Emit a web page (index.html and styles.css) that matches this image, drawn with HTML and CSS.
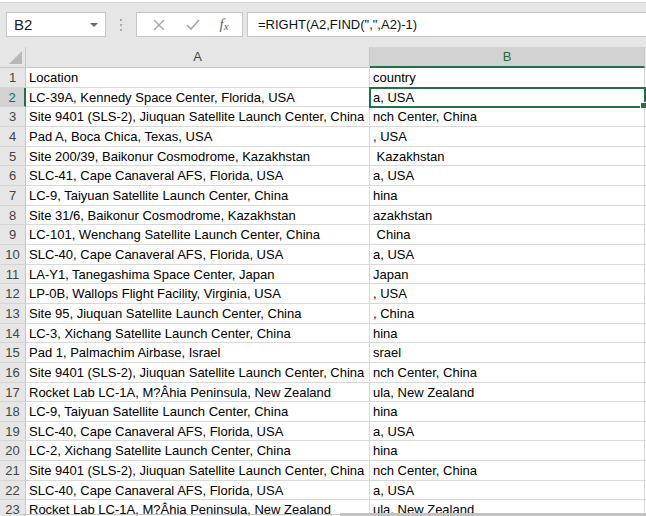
FILE: index.html
```html
<!DOCTYPE html>
<html lang="en">
<head>
    <meta charset="UTF-8">
    <title>Book1 - Excel</title>
    <link rel="stylesheet" href="styles.css">
</head>
<body>
    <div class="toolbar">
        <div class="namebox">
            <span>B2</span>
            <span class="caret"></span>
        </div>
        <div class="grip"><i></i><i></i><i></i></div>
        <div class="fbuttons">
            <svg width="14" height="14" viewBox="0 0 14 14"><path d="M2 2 L12 12 M12 2 L2 12" stroke="#a6a6a6" stroke-width="1.4" fill="none"/></svg>
            <svg width="16" height="14" viewBox="0 0 16 14"><path d="M2 7 L6 11 L14 2" stroke="#a6a6a6" stroke-width="1.6" fill="none"/></svg>
            <span class="fx">f<sub>x</sub></span>
        </div>
        <div class="formula">=RIGHT(A2,FIND(",",A2)-1)</div>
    </div>

    <div class="sheet" id="sheet">
        <div class="corner"></div>
        <div class="colhead">A</div>
        <div class="colhead selected">B</div>
        <div class="colhead"></div>
    </div>

    <div class="hscroll">
        <div class="track"></div>
        <div class="thumb"></div>
    </div>

    <script>
        const rows = [
            ['Location', 'country'],
            ['LC-39A, Kennedy Space Center, Florida, USA', 'a, USA'],
            ['Site 9401 (SLS-2), Jiuquan Satellite Launch Center, China', 'nch Center, China'],
            ['Pad A, Boca Chica, Texas, USA', ', USA'],
            ['Site 200/39, Baikonur Cosmodrome, Kazakhstan', ' Kazakhstan'],
            ['SLC-41, Cape Canaveral AFS, Florida, USA', 'a, USA'],
            ['LC-9, Taiyuan Satellite Launch Center, China', 'hina'],
            ['Site 31/6, Baikonur Cosmodrome, Kazakhstan', 'azakhstan'],
            ['LC-101, Wenchang Satellite Launch Center, China', ' China'],
            ['SLC-40, Cape Canaveral AFS, Florida, USA', 'a, USA'],
            ['LA-Y1, Tanegashima Space Center, Japan', 'Japan'],
            ['LP-0B, Wallops Flight Facility, Virginia, USA', ', USA'],
            ['Site 95, Jiuquan Satellite Launch Center, China', ', China'],
            ['LC-3, Xichang Satellite Launch Center, China', 'hina'],
            ['Pad 1, Palmachim Airbase, Israel', 'srael'],
            ['Site 9401 (SLS-2), Jiuquan Satellite Launch Center, China', 'nch Center, China'],
            ['Rocket Lab LC-1A, M?\u00c2hia Peninsula, New Zealand', 'ula, New Zealand'],
            ['LC-9, Taiyuan Satellite Launch Center, China', 'hina'],
            ['SLC-40, Cape Canaveral AFS, Florida, USA', 'a, USA'],
            ['LC-2, Xichang Satellite Launch Center, China', 'hina'],
            ['Site 9401 (SLS-2), Jiuquan Satellite Launch Center, China', 'nch Center, China'],
            ['SLC-40, Cape Canaveral AFS, Florida, USA', 'a, USA'],
            ['Rocket Lab LC-1A, M?\u00c2hia Peninsula, New Zealand', 'ula, New Zealand']
        ];

        const sheet = document.getElementById('sheet');

        function cell(cls, text) {
            const div = document.createElement('div');
            div.className = cls;
            div.textContent = text;
            sheet.appendChild(div);
        }

        rows.forEach((r, i) => {
            const n = i + 1;
            cell(n === 2 ? 'rowhead selected' : 'rowhead', n);
            cell('cell', r[0]);
            cell(n === 2 ? 'cell active' : 'cell', r[1]);
            cell('cell', '');
        });
    </script>
</body>
</html>
```

FILE: styles.css
```css
body {
    margin: 0;
    width: 646px;
    height: 516px;
    overflow: hidden;
    position: relative;
    font-family: "Liberation Sans", Arial, sans-serif;
    background: #fff;
}
.toolbar {
    height: 45px;
    margin-top: 2px;
    border-top: 1px solid #d6d6d6;
    background: #e6e6e6;
    display: flex;
    align-items: flex-start;
    padding-top: 9px;
    box-sizing: border-box;
}
.namebox {
    width: 100px;
    height: 25px;
    margin-left: 6px;
    background: #fff;
    border: 1px solid #c6c6c6;
    box-sizing: border-box;
    display: flex;
    align-items: center;
    justify-content: space-between;
    padding: 0 7px 0 7px;
    font-size: 15px;
    color: #222;
}
.caret {
    width: 0;
    height: 0;
    border-left: 4px solid transparent;
    border-right: 4px solid transparent;
    border-top: 4px solid #6a6a6a;
}
.grip {
    width: 30px;
    height: 25px;
    display: flex;
    flex-direction: column;
    align-items: center;
    justify-content: center;
    gap: 3px;
}
.grip i {
    width: 2px;
    height: 2px;
    background: #a8a8a8;
}
.fbuttons {
    width: 107px;
    height: 25px;
    background: #fff;
    border: 1px solid #c6c6c6;
    box-sizing: border-box;
    display: flex;
    align-items: center;
    justify-content: space-around;
    padding: 0 4px 0 6px;
}
.fx {
    font-family: "Liberation Serif", serif;
    font-style: italic;
    font-size: 15px;
    color: #666;
}
.fx sub {
    font-size: 11px;
    vertical-align: -1px;
}
.formula {
    flex: 1;
    height: 25px;
    margin-left: 4px;
    background: #fff;
    border: 1px solid #c6c6c6;
    border-right: none;
    box-sizing: border-box;
    padding-left: 10px;
    font-size: 13px;
    line-height: 23px;
    color: #111;
}
.sheet {
    display: grid;
    grid-template-columns: 26px 344px 275px 1fr;
    grid-template-rows: 21px;
    grid-auto-rows: 19.67px;
    font-size: 13px;
}
.corner {
    background: #e6e6e6;
    border-right: 1px solid #c8c8c8;
    border-bottom: 1px solid #c8c8c8;
    position: relative;
}
.corner::after {
    content: "";
    position: absolute;
    right: 3px;
    bottom: 3px;
    border-left: 13px solid transparent;
    border-bottom: 13px solid #b8b8b8;
}
.colhead {
    background: #e6e6e6;
    border-right: 1px solid #c8c8c8;
    border-bottom: 1px solid #c8c8c8;
    text-align: center;
    line-height: 20px;
    color: #444;
}
.colhead.selected {
    background: #d2d2d2;
    color: #1e6b40;
    border-bottom: 2px solid #217346;
}
.rowhead {
    background: #e6e6e6;
    border-right: 1px solid #c8c8c8;
    border-bottom: 1px solid #d4d4d4;
    text-align: center;
    line-height: 19px;
    color: #444;
}
.rowhead.selected {
    background: #d2d2d2;
    color: #1e6b40;
    border-right: 2px solid #217346;
}
.cell {
    border-right: 1px solid #d9d9d9;
    border-bottom: 1px solid #d9d9d9;
    padding-left: 3px;
    line-height: 19px;
    white-space: pre;
    overflow: hidden;
    color: #000;
}
.cell.active {
    outline: 2px solid #217346;
    outline-offset: -1px;
    position: relative;
    overflow: visible;
}
.cell.active::after {
    content: "";
    position: absolute;
    right: -3px;
    bottom: -3px;
    width: 5px;
    height: 5px;
    background: #217346;
    border: 1px solid #fff;
}
.hscroll {
    position: absolute;
    left: 0;
    right: 0;
    bottom: 0;
    height: 3px;
}
.hscroll .track {
    position: absolute;
    left: 20px;
    right: 0;
    top: 1px;
    height: 1px;
    background: #c8c8c8;
}
.hscroll .thumb {
    position: absolute;
    left: 340px;
    right: 0;
    top: 0;
    height: 3px;
    background: #c2c2c2;
}
```
